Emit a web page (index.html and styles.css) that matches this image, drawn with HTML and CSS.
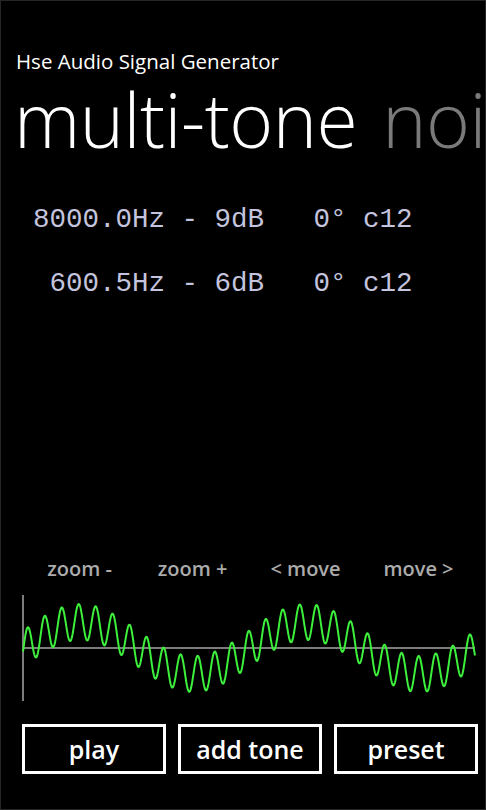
FILE: index.html
```html
<!DOCTYPE html>
<html lang="en">
<head>
    <meta charset="UTF-8">
    <meta name="viewport" content="width=device-width, initial-scale=1.0">
    <title>Hse Audio Signal Generator</title>
    <link rel="stylesheet" href="styles.css">
</head>
<body>
    <div class="screen">
        <div class="app-title">Hse Audio Signal Generator</div>
        <div class="pivot">
            <span class="pivot-item active">multi-tone</span>
            <span class="pivot-item">noise</span>
        </div>
        <div class="tones">
            <div class="tone">8000.0Hz - 9dB   0° c12</div>
            <div class="tone"> 600.5Hz - 6dB   0° c12</div>
        </div>
        <div class="scope">
            <div class="scope-controls">
                <span>zoom -</span>
                <span>zoom +</span>
                <span>&lt; move</span>
                <span>move &gt;</span>
            </div>
            <svg class="scope-graph" width="486" height="116" viewBox="0 0 486 116">
                <line class="axis" x1="22" y1="5" x2="22" y2="111"></line>
                <line class="axis" x1="22" y1="58" x2="474" y2="58"></line>
                <polyline id="wave" class="wave" points=""></polyline>
            </svg>
        </div>
        <div class="buttons">
            <button>play</button>
            <button>add tone</button>
            <button>preset</button>
        </div>
    </div>
    <script>
        // two tones: 600.5Hz at -6dB and 8000Hz at -9dB
        const wave = document.getElementById('wave');
        const mid = 58;
        let points = [];
        for (let x = 22; x <= 474; x += 0.5) {
            const slow = 26 * Math.sin(2 * Math.PI * (x - 23) / 226);
            const fast = 18 * Math.cos(2 * Math.PI * (x - 26.7) / 17);
            points.push(x + ',' + (mid - slow - fast).toFixed(2));
        }
        wave.setAttribute('points', points.join(' '));
    </script>
</body>
</html>
```

FILE: styles.css
```css
body, html {
    margin: 0;
    padding: 0;
    background: #000;
    color: #fff;
    font-family: "Open Sans", sans-serif;
}

.screen {
    width: 486px;
    height: 810px;
    box-sizing: border-box;
    border: 1px solid #262626;
    display: flex;
    flex-direction: column;
    overflow: hidden;
}

.app-title {
    margin: 47px 0 0 15px;
    font-size: 20.5px;
    line-height: 26px;
}

.pivot {
    margin-top: 3px;
    padding-left: 13px;
    height: 84px;
    font-size: 75px;
    font-weight: 300;
    line-height: 84px;
    white-space: nowrap;
    letter-spacing: -0.5px;
}

.pivot-item {
    color: #7a7a7a;
    margin-right: 6px;
}

.pivot-item.active {
    color: #fff;
}

.tones {
    margin-top: 27px;
}

.tone {
    padding-left: 32px;
    height: 64px;
    line-height: 64px;
    font-family: "Liberation Mono", monospace;
    font-size: 27.5px;
    white-space: pre;
    color: #c4c4de;
}

.scope {
    margin-top: auto;
}

.scope-controls {
    display: grid;
    grid-template-columns: repeat(4, 113px);
    margin-left: 22px;
    height: 24px;
    line-height: 24px;
    font-size: 20px;
    font-weight: 600;
    color: #ababab;
    text-align: center;
}

.scope-graph {
    display: block;
    margin-top: 9px;
}

.axis {
    stroke: #7c7c7c;
    stroke-width: 2;
}

.wave {
    fill: none;
    stroke: #3cf03c;
    stroke-width: 2;
    stroke-linejoin: round;
}

.buttons {
    display: flex;
    gap: 12px;
    margin: 18px 0 35px 21px;
}

.buttons button {
    width: 144px;
    height: 50px;
    background: #000;
    border: 3px solid #fff;
    color: #fff;
    font-family: "Open Sans", sans-serif;
    font-size: 25px;
    font-weight: 600;
    padding: 0;
}
```
